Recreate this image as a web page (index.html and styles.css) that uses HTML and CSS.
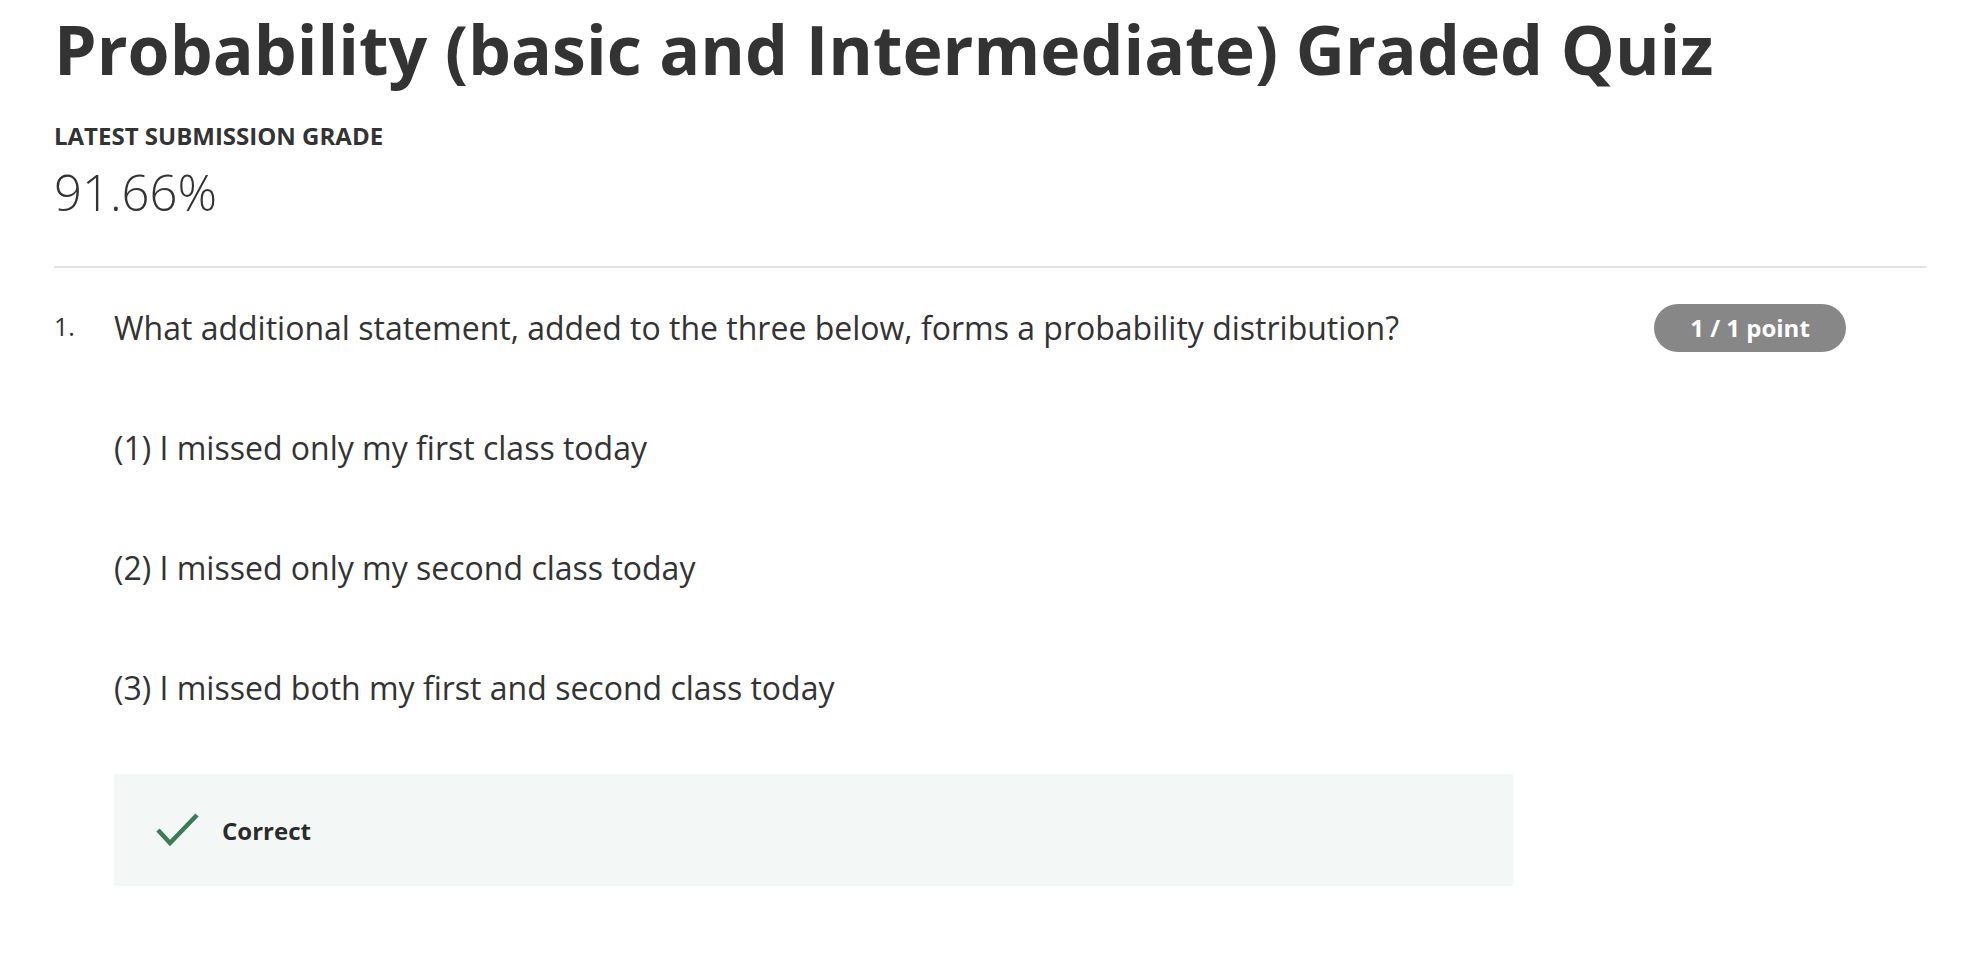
FILE: index.html
```html
<!DOCTYPE html>
<html lang="en">
<head>
<meta charset="utf-8">
<title>Graded Quiz</title>
<link rel="stylesheet" href="styles.css">
</head>
<body>
<main class="page">
  <header class="header">
    <h1 class="title">Probability (basic and Intermediate) Graded Quiz</h1>
    <div class="grade-label">LATEST SUBMISSION GRADE</div>
    <div class="grade-value">91.66%</div>
  </header>
  <hr class="divider">
  <section class="question">
    <div class="q-num">1.</div>
    <div class="q-body">
      <div class="q-head">
        <p class="q-text">What additional statement, added to the three below, forms a probability distribution?</p>
        <span class="badge">1 / 1 point</span>
      </div>
      <p class="option first">(1) I missed only my first class today</p>
      <p class="option">(2) I missed only my second class today</p>
      <p class="option">(3) I missed both my first and second class today</p>
      <div class="feedback">
        <svg class="check" width="44" height="34" viewBox="0 0 44 34"><path d="M2 17 L14 30 L41 2" fill="none" stroke="#3a7d55" stroke-width="4.5"/></svg>
        <span class="feedback-text">Correct</span>
      </div>
    </div>
  </section>
</main>
</body>
</html>
```
FILE: styles.css
```css
* { box-sizing: border-box; }
body {
  margin: 0;
  background: #ffffff;
  color: #333333;
  font-family: "Open Sans", "Noto Sans", sans-serif;
}
.page {
  padding: 0 54px;
}
.title {
  margin: 0;
  padding-top: 4px;
  font-size: 68px;
  font-weight: 700;
  line-height: 90px;
  color: #333333;
}
.grade-label {
  margin-top: 27px;
  font-size: 24px;
  font-weight: 700;
  line-height: 30px;
  color: #333;
}
.grade-value {
  margin-top: 13px;
  font-size: 49px;
  font-weight: 300;
  line-height: 56px;
  color: #333;
}
.divider {
  margin: 46px 0 0;
  border: 0;
  border-top: 2px solid #e1e1e1;
}
.question {
  display: flex;
  padding-top: 36px;
}
.q-num {
  width: 60px;
  font-size: 25px;
  line-height: 44px;
}
.q-body {
  flex: 1;
}
.q-head {
  display: flex;
  align-items: center;
  justify-content: space-between;
  padding-right: 80px;
}
.q-text {
  margin: 0;
  font-size: 32px;
  line-height: 44px;
}
.badge {
  display: inline-block;
  width: 192px;
  height: 48px;
  line-height: 48px;
  border-radius: 24px;
  background: #878787;
  color: #fff;
  font-size: 24px;
  font-weight: 700;
  text-align: center;
}
.option {
  margin: 76px 0 0;
  font-size: 32px;
  line-height: 44px;
}
.option.first {
  margin-top: 74px;
}
.feedback {
  display: flex;
  align-items: center;
  gap: 22px;
  margin-top: 64px;
  width: 1399px;
  height: 112px;
  padding-left: 42px;
  background: #f3f8f6;
}
.feedback-text {
  font-size: 24px;
  font-weight: 700;
  color: #2b2b2b;
}
```
